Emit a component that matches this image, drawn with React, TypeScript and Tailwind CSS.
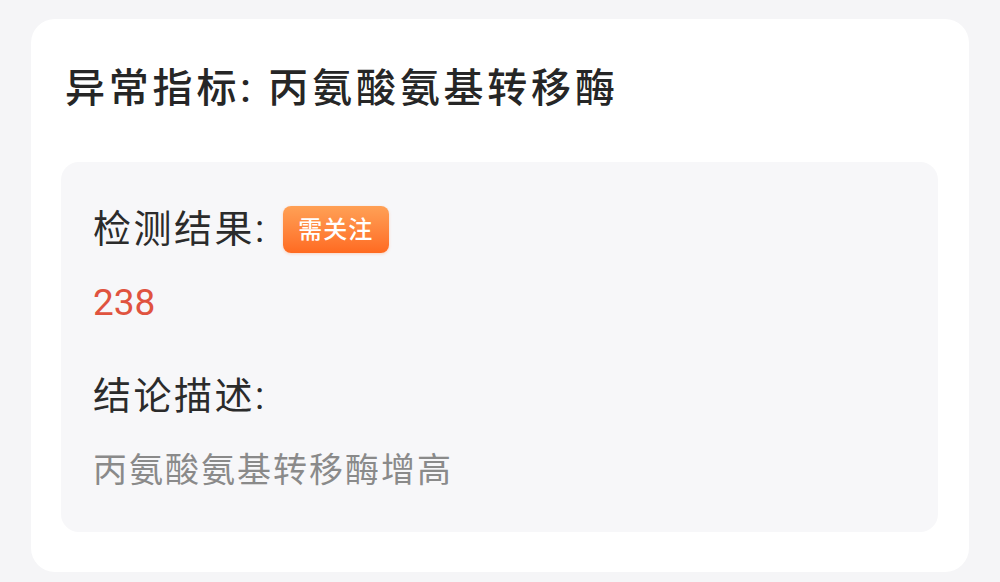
const fontStack = "font-['Roboto','Noto_Sans_CJK_SC',sans-serif]";

export default function App() {
  return (
    <div className={`min-h-[582px] w-full bg-[#f5f5f7] px-[31px] pt-[19px] pb-[10px] ${fontStack}`}>
      <div className="rounded-[24px] bg-white px-[30px] pr-[31px] pt-[42px] pb-[40px]">
        <h1 className="pl-[4px] text-[40px] leading-[56px] font-medium tracking-[3.8px] text-[#262626]">
          异常指标: 丙氨酸氨基转移酶
        </h1>

        <div className="mt-[45px] rounded-[18px] bg-[#f7f7f9] px-[32px] pt-[44px] pb-[42px]">
          <div className="flex h-[47px] items-center">
            <span className="text-[38px] leading-[47px] tracking-[2.5px] text-[#2b2b2b]">检测结果:</span>
            <span className="ml-[16px] flex h-[47px] w-[106px] items-center justify-center rounded-[8px] bg-gradient-to-b from-[#ffa055] to-[#ff6a20] text-[24px] font-medium tracking-[1px] text-white shadow-[0_1px_3px_rgba(255,106,32,0.25)]">
              需关注
            </span>
          </div>

          <div className="mt-[30px] text-[37px] leading-[40px] text-[#e0533f]">238</div>

          <div className="mt-[50px] text-[38px] leading-[47px] tracking-[2.5px] text-[#2b2b2b]">结论描述:</div>

          <div className="mt-[30px] text-[34px] leading-[40px] tracking-[2px] text-[#8a8a8a]">
            丙氨酸氨基转移酶增高
          </div>
        </div>
      </div>
    </div>
  );
}
